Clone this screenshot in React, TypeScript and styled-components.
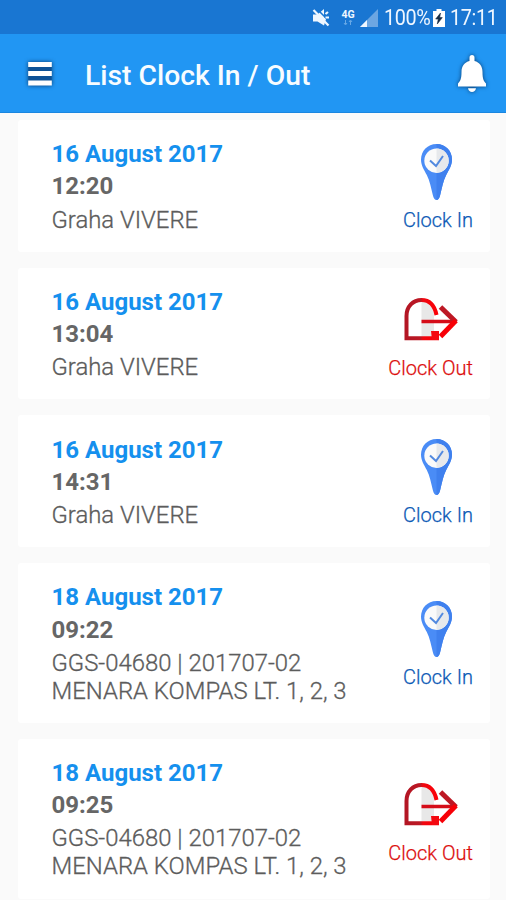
import React from "react";
import styled, { createGlobalStyle } from "styled-components";

const GlobalStyle = createGlobalStyle`
  * { box-sizing: border-box; }
  body { margin: 0; background: #fafafa; font-family: Roboto, sans-serif; }
`;

const Screen = styled.div`
  width: 506px;
  height: 900px;
  display: flex;
  flex-direction: column;
  overflow: hidden;
  background: #fafafa;
`;

const StatusBar = styled.div`
  height: 34px;
  flex: none;
  display: flex;
  align-items: center;
  padding: 2px 8px 0 312px;
  background: #1976d2;
  color: #eef6ff;
  svg { display: block; flex: none; }
`;

const Network = styled.div`
  width: 16px;
  margin-left: 10px;
  display: flex;
  flex-direction: column;
  align-items: center;
  font-size: 10.5px;
  font-weight: 700;
  line-height: 10px;
`;

const StatusText = styled.span<{ $width: number }>`
  width: ${(p) => p.$width}px;
  flex: none;
  font-size: 22px;
  line-height: 32px;
  letter-spacing: -0.4px;
  white-space: nowrap;
  transform: scaleX(0.9);
  transform-origin: 0 50%;
`;

const AppBar = styled.header`
  height: 79px;
  flex: none;
  display: flex;
  align-items: center;
  padding: 1px 16px 0 24px;
  background: #2196f3;
  border-bottom: 1px solid #1a86e0;
`;

const IconButton = styled.button`
  display: flex;
  padding: 0;
  border: 0;
  background: none;
  svg { display: block; overflow: visible; filter: drop-shadow(0 0.5px 2px rgba(0, 30, 70, 0.75)); }
`;

const Title = styled.h1`
  flex: 1;
  margin: 4px 0 0 29px;
  color: #f7fcff;
  font-size: 28.3px;
  font-weight: 500;
  line-height: 32px;
`;

const List = styled.main`
  flex: none;
  display: flex;
  flex-direction: column;
  gap: 16px;
  padding: 7px 16px 0 18px;
`;

const Card = styled.article`
  display: flex;
  align-items: center;
  justify-content: space-between;
  padding: 20.4px 17px 19px 33.5px;
  border-radius: 3px;
  background: #fff;
`;

const Details = styled.div`
  display: flex;
  flex-direction: column;
  gap: 4px;
  color: #666;
  font-size: 24px;
  line-height: 28.1px;
`;

const DateText = styled.div`
  color: #1590ee;
  font-weight: 700;
`;

const TimeText = styled.div`
  font-weight: 700;
`;

const Place = styled.div`
  padding-top: 1px;
  margin-bottom: -1px;
  color: #5c5c5c;
  font-size: 23.9px;
  font-weight: 300;
  white-space: pre-line;
  -webkit-text-stroke: 0.3px #5c5c5c;
`;

const Action = styled.div<{ $out?: boolean }>`
  display: flex;
  flex-direction: column;
  align-items: center;
  padding-top: 3px;
  color: ${(p) => (p.$out ? "#dc0c0c" : "#0a59b5")};
  font-size: 20px;
  font-weight: 300;
  line-height: 24px;
  -webkit-text-stroke: 0.25px currentColor;
  svg { display: block; margin-bottom: 8px; }
`;

const MuteIcon = () => (
  <svg width="18" height="18" viewBox="0 0 18 18">
    <path d="M1 5.500h4.500L12 0v8l2 2-2 6.500-6.500-4H1z" fill="#eef6ff" />
    <path d="M5 0l12 12" stroke="#1976d2" strokeWidth="1.500" />
    <path d="M1.500 1l15 15.500M13.500 5l2.500-2M13.500 8.500H17" stroke="#eef6ff" strokeWidth="2.200" />
  </svg>
);

const DataArrows = () => (
  <svg width="10" height="6" viewBox="0 0 10 6">
    <path d="M2.500 0v4M1 3l1.500 2L4 3M7.500 5V1M6 2l1.500-2L9 2" fill="none" stroke="#68a9e6" />
  </svg>
);

const SignalIcon = () => (
  <svg width="18" height="18" viewBox="0 0 18 18">
    <path d="M0 18L18 0v18z" fill="#6ca6e2" />
    <path d="M0 18l7-7v7z" fill="#eef6ff" />
  </svg>
);

const BatteryIcon = () => (
  <svg width="12" height="18" viewBox="0 0 12 18">
    <path d="M3.500 0h5v2H12v16H0V2h3.500z" fill="#fff" />
    <path d="M7.500 4L2.700 10h2.600l-1 5 5-6.400H6.700z" fill="#182c44" stroke="#182c44" strokeWidth=".6" />
  </svg>
);

const MenuIcon = () => (
  <svg width="32" height="28" viewBox="0 0 32 28">
    <path d="M4.500 4h23v20h-23z" fill="#0d5297" />
    <path d="M4.200 4.500h23.600M4.200 13.500h23.600M4.200 23h23.600" stroke="#fff" strokeWidth="5" />
  </svg>
);

const BellIcon = () => (
  <svg width="36" height="40" viewBox="0 0 36 40">
    <path d="M18 1c1.600 0 2.500 1 2.500 2.500V7c5 1.200 8 5 8 11 0 6.500 1 9 3.500 11.500V32.500H4v-3c2.500-2.500 3.500-5 3.500-11.500 0-6 3-9.800 8-11V3.500C15.500 2 16.400 1 18 1z" fill="#fff" />
    <path d="M14 34.300h8c-.5 2.500-2 3.700-4 3.700s-3.500-1.200-4-3.700z" fill="#fff" />
  </svg>
);

const ClockInIcon = () => (
  <svg width="56" height="56" viewBox="0 0 56 56">
    <path d="M26.500 0C17.500 0 11 7 11 15.500c0 6 3.200 10.500 5.800 15.500 3.200 6 4.200 13 6 20 .8 3.400 2 5 3.700 5s2.900-1.600 3.700-5c1.800-7 2.800-14 6-20 2.600-5 5.800-9.500 5.800-15.500C42 7 35.500 0 26.500 0z" fill="#4a8cf6" />
    <path d="M26.500 0C35.500 0 42 7 42 15.500c0 6-3.200 10.500-5.800 15.500-3.200 6-4.200 13-6 20-.8 3.400-2 5-3.700 5z" fill="#3f80ee" />
    <circle cx="26.500" cy="16.700" r="12.200" fill="#fafafa" />
    <path d="M26.500 4.500a12.200 12.200 0 010 24.400z" fill="#e7e9ec" />
    <path d="M20 16.500l6 5.500 7-10" fill="none" stroke="#5289df" strokeWidth="2" />
  </svg>
);

const ClockOutIcon = () => (
  <svg width="56" height="56" viewBox="0 0 56 56">
    <defs>
      <linearGradient id="door" x1="0" x2="1">
        <stop offset="0" stopColor="#b31624" />
        <stop offset=".46" stopColor="#bd1824" />
        <stop offset=".54" stopColor="#f00710" />
        <stop offset="1" stopColor="#fb0007" />
      </linearGradient>
    </defs>
    <path d="M18.500 8.500c6 0 11 4 12.500 12v24H18.500z" fill="#e8e8e8" />
    <path d="M33.500 23C31.500 13 26.500 8 18.500 8 10 8 3.500 14.500 3.500 24v22.300H34V42h-3.500" fill="none" stroke="url(#door)" strokeWidth="4" />
    <path d="M28 39h8v9h-7z" fill="#f40910" />
    <path d="M18.500 29.500H51" stroke="#d50d19" strokeWidth="3.500" />
    <path d="M37.500 15L53 30" fill="none" stroke="#bd1824" strokeWidth="5" />
    <path d="M37.500 44.500L53 28.500" fill="none" stroke="#f70007" strokeWidth="5" />
  </svg>
);

type Entry = { date: string; time: string; place: string; out?: boolean };

const entries: Entry[] = [
  { date: "16 August 2017", time: "12:20", place: "Graha VIVERE" },
  { date: "16 August 2017", time: "13:04", place: "Graha VIVERE", out: true },
  { date: "16 August 2017", time: "14:31", place: "Graha VIVERE" },
  { date: "18 August 2017", time: "09:22", place: "GGS-04680 | 201707-02\nMENARA KOMPAS LT. 1, 2, 3" },
  { date: "18 August 2017", time: "09:25", place: "GGS-04680 | 201707-02\nMENARA KOMPAS LT. 1, 2, 3", out: true },
];

const Signal = styled.div`
  margin: 0 6px 0 4px;
`;

const Battery = styled.div`
  margin-right: 5px;
`;

export default function App() {
  return (
    <Screen>
      <GlobalStyle />
      <StatusBar>
        <MuteIcon />
        <Network>
          4G
          <DataArrows />
        </Network>
        <Signal>
          <SignalIcon />
        </Signal>
        <StatusText $width={49}>100%</StatusText>
        <Battery>
          <BatteryIcon />
        </Battery>
        <StatusText $width={48}>17:11</StatusText>
      </StatusBar>
      <AppBar>
        <IconButton aria-label="Menu">
          <MenuIcon />
        </IconButton>
        <Title>List Clock In / Out</Title>
        <IconButton aria-label="Notifications">
          <BellIcon />
        </IconButton>
      </AppBar>
      <List>
        {entries.map((e) => (
          <Card key={e.date + e.time}>
            <Details>
              <DateText>{e.date}</DateText>
              <TimeText>{e.time}</TimeText>
              <Place>{e.place}</Place>
            </Details>
            <Action $out={e.out}>
              {e.out ? <ClockOutIcon /> : <ClockInIcon />}
              {e.out ? "Clock Out" : "Clock In"}
            </Action>
          </Card>
        ))}
      </List>
    </Screen>
  );
}
